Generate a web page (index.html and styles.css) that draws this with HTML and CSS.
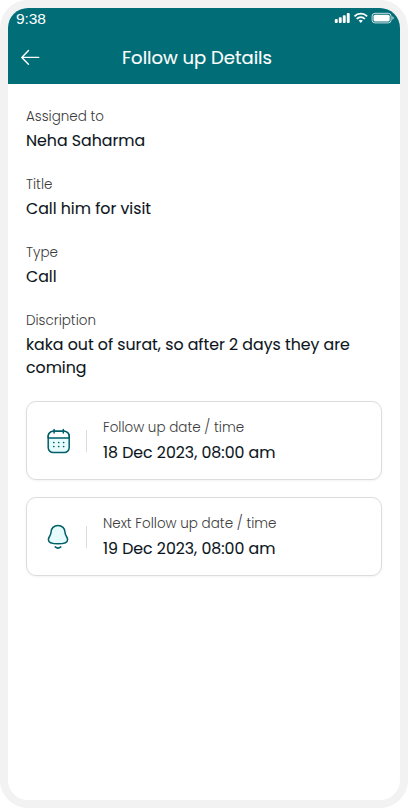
FILE: index.html
```html
<!DOCTYPE html>
<html lang="en">
<head>
<meta charset="utf-8">
<title>Follow up Details</title>
<link rel="stylesheet" href="styles.css">
</head>
<body>
<div class="phone">
  <header class="header">
    <div class="status">
      <span class="time">9:38</span>
      <svg class="status-icons" width="60" height="12" viewBox="0 0 60 12" fill="#fff">
        <rect x="0.8" y="7" width="2.9" height="4" rx=".9"/>
        <rect x="4.8" y="5.2" width="2.9" height="5.8" rx=".9"/>
        <rect x="8.8" y="3.2" width="2.9" height="7.8" rx=".9"/>
        <rect x="12.8" y="1" width="2.9" height="10" rx=".9"/>
        <g fill="none" stroke="#fff" stroke-width="1.8">
          <path d="M20.5 4.4a8.600 8.600 0 0 1 12.600 0"/>
          <path d="M22.700 7a5.500 5.500 0 0 1 8.200 0"/>
        </g>
        <path d="M24.700 8.600a3.200 3.200 0 0 1 4.200 0L26.800 10.900z"/>
        <rect x="38.100" y="1.300" width="19" height="9.600" rx="2.800" fill="none" stroke="#fff" stroke-opacity=".8"/>
        <rect x="39.500" y="2.700" width="16.200" height="6.800" rx="1.500"/>
        <path d="M58.300 4.300q1.500.6 1.500 1.700t-1.500 1.700z" opacity=".75"/>
      </svg>
    </div>
    <div class="titlebar">
      <svg class="back" width="20" height="18" viewBox="0 0 20 18" fill="none" stroke="#fff" stroke-width="1.4" stroke-linecap="round" stroke-linejoin="round"><path d="M18.700 8.400H1.800M8.500 1.500L1.800 8.400L8.500 15.300"/></svg>
      <h1 class="title">Follow up Details</h1>
    </div>
  </header>
  <main class="content">
    <section class="field"><div class="label">Assigned to</div><div class="value">Neha Saharma</div></section>
    <section class="field"><div class="label">Title</div><div class="value">Call him for visit</div></section>
    <section class="field"><div class="label">Type</div><div class="value">Call</div></section>
    <section class="field"><div class="label">Discription</div><div class="value">kaka out of surat, so after 2 days they are<br>coming</div></section>
    <section class="card">
      <svg class="icon" width="24" height="26" viewBox="0 0 24 26" fill="none" stroke="#005f69" stroke-width="1.5" stroke-linecap="round">
        <rect x="1.2" y="3.2" width="21" height="21.4" rx="5" fill="#e6fbfc"/>
        <path d="M1.8 9.4V8.2a5 5 0 0 1 5-5h9.8a5 5 0 0 1 5 5v1.2z" fill="#fff" stroke="none"/>
        <path d="M1.2 10V8.2a5 5 0 0 1 5-5h11a5 5 0 0 1 5 5V10M1.2 10h21M7.1 1.4v3.700M16.3 1.4v3.700"/>
        <path d="M6.8 14.5h.01M11.7 14.5h.01M16.6 14.5h.01M6.8 18.500h.01M11.7 18.500h.01M16.6 18.500h.01" stroke-width="1.7"/>
      </svg>
      <span class="divider"></span>
      <div class="info"><div class="label">Follow up date / time</div><div class="value">18 Dec 2023, 08:00 am</div></div>
    </section>
    <section class="card">
      <svg class="icon" width="24" height="26" viewBox="0 0 24 26" fill="none" stroke="#005f69" stroke-width="1.5" stroke-linecap="round">
        <path d="M11 1.500C7 1.500 4 4.300 4 8.200C4 11.800 1.400 12.600 1.400 15.700C1.400 19 5.500 19.800 11 19.800S20.600 19 20.600 15.700C20.600 12.600 18 11.800 18 8.200C18 4.300 15 1.500 11 1.500Z" fill="#e6fbfc"/>
        <path d="M8.200 22.900Q11 25.300 13.800 22.900"/>
      </svg>
      <span class="divider"></span>
      <div class="info"><div class="label">Next Follow up date / time</div><div class="value">19 Dec 2023, 08:00 am</div></div>
    </section>
  </main>
</div>
</body>
</html>
```
FILE: styles.css
```css
* { box-sizing: border-box; }
body { margin: 0; background: #fff; font-family: Poppins, Inter, sans-serif; }
.phone { width: 408px; height: 808px; border: 8px solid #f2f2f2; border-radius: 28px; background: #fff; overflow: hidden; }
.header { height: 76px; background: #006d77; color: #fff; }
.status { display: flex; justify-content: space-between; height: 24px; padding: 4px 6px 0 8px; }
.time { font: 15.5px/14px "Liberation Sans", sans-serif; letter-spacing: -.1px; }
.titlebar { display: grid; grid-template-columns: 20px 1fr 34px; align-items: center; height: 52px; padding: 0 12px; }
.title { margin: 0; font-size: 18px; line-height: 26px; font-weight: 400; text-align: center; white-space: nowrap; -webkit-text-stroke: .12px; }
.content { padding: 22.2px 18px 0; }
.field { margin-bottom: 21.3px; }
.label { font-size: 13.5px; line-height: 21px; font-weight: 300; color: #3c3c3c; white-space: nowrap; }
.value { margin-top: 2px; font-size: 15.76px; line-height: 23.5px; font-weight: 400; color: #0c151c; white-space: nowrap; -webkit-text-stroke: .1px; }
.card { display: flex; align-items: center; height: 79px; margin-bottom: 17px; padding-left: 20px; border: 1px solid #dcdcdc; border-radius: 10px; background: #fff; box-shadow: 0 1px 3px rgba(0, 0, 0, .05); }
.card .value { margin-top: 3px; }
.icon { flex: none; margin-top: 1px; }
.divider { width: 1px; height: 22px; margin: 1px 16px 0 15px; background: #dcdcdc; }
```
